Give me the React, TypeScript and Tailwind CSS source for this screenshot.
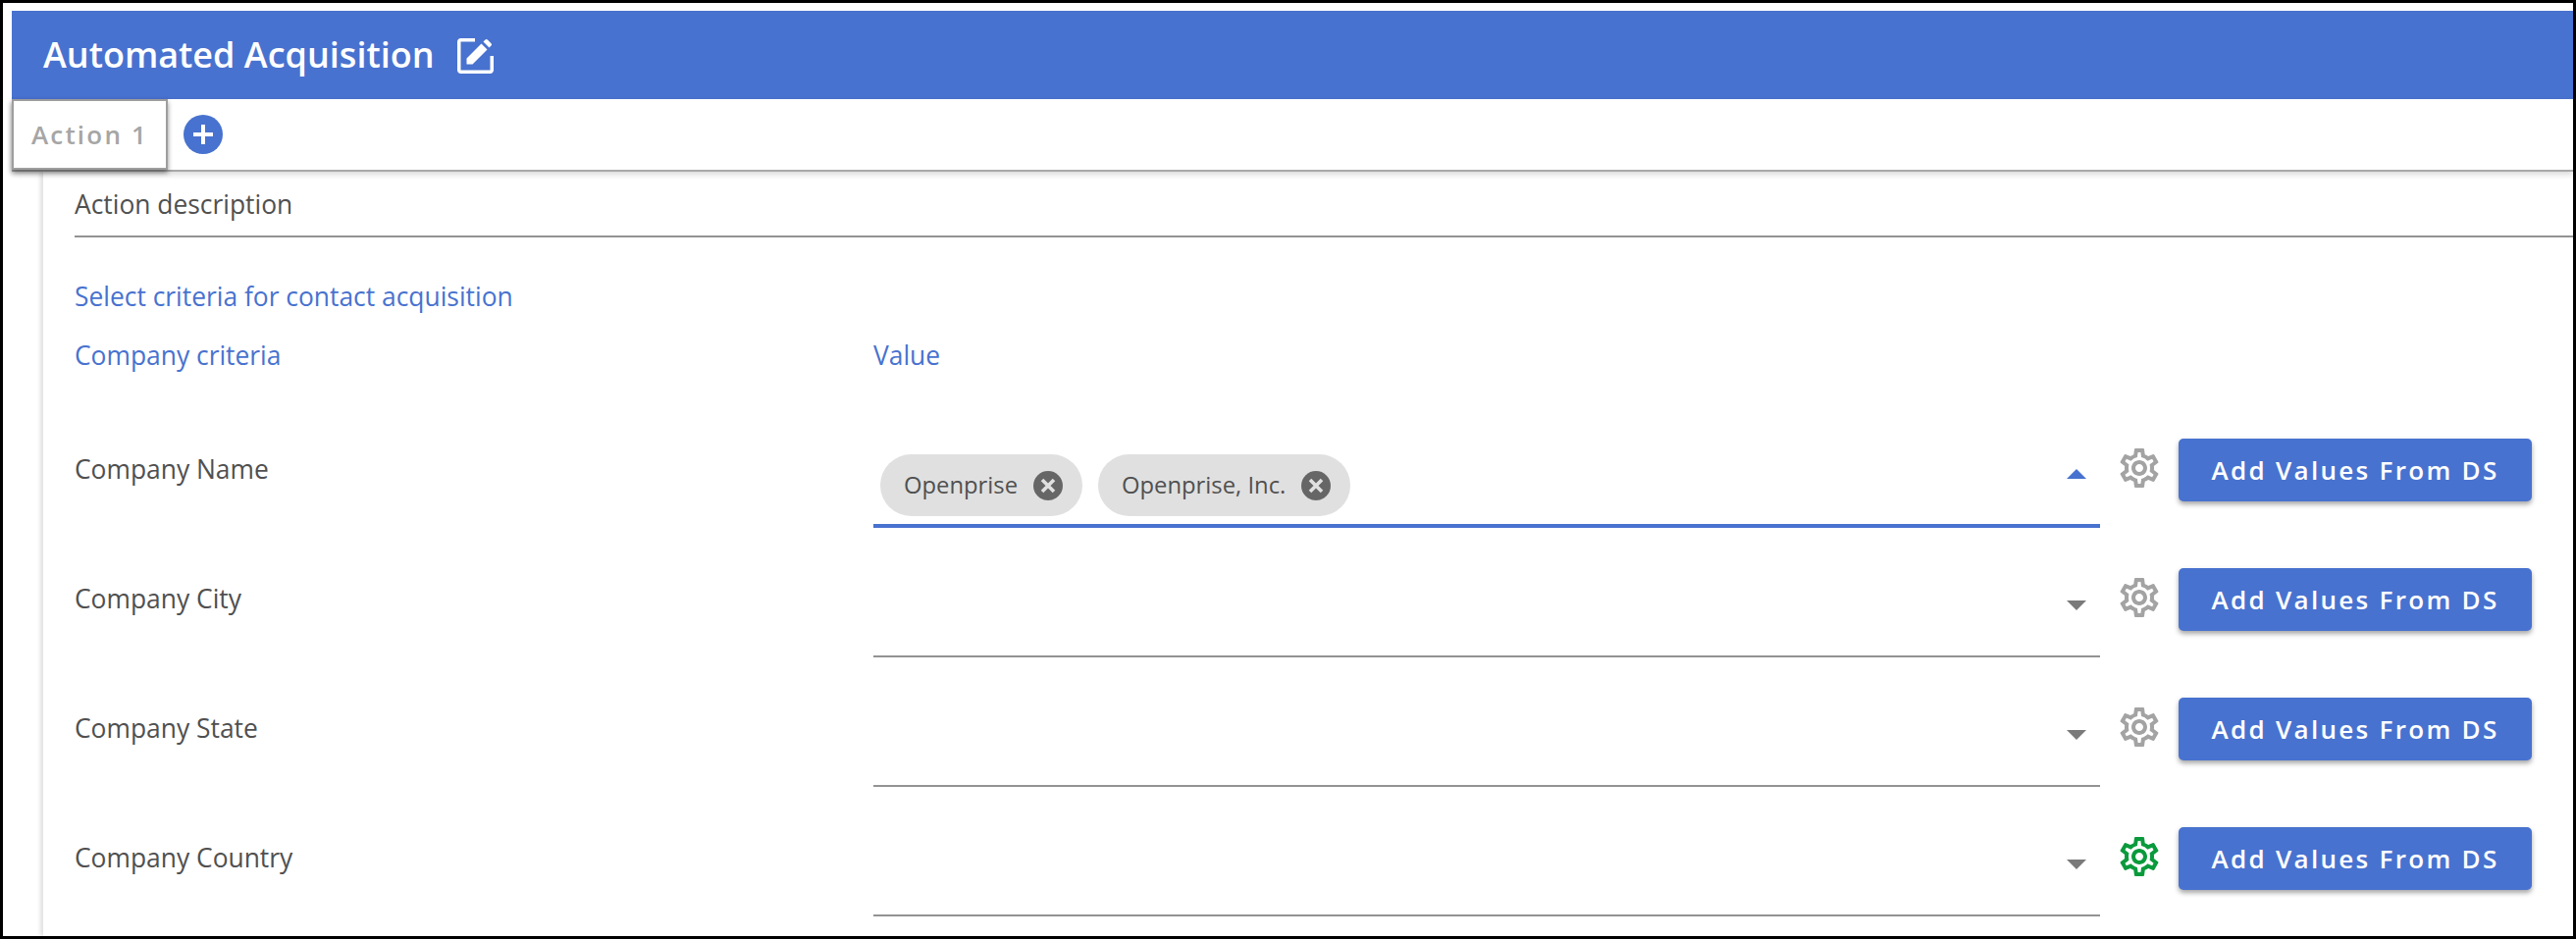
import React from 'react';

const GEAR = 'M19.43 12.98c.04-.32.07-.64.07-.98 0-.34-.03-.66-.07-.98l2.11-1.65c.19-.15.24-.42.12-.64l-2-3.46c-.09-.16-.26-.25-.44-.25-.06 0-.12.01-.17.03l-2.49 1c-.52-.4-1.08-.73-1.69-.98l-.38-2.65C14.46 2.18 14.25 2 14 2h-4c-.25 0-.46.18-.49.42l-.38 2.65c-.61.25-1.17.59-1.69.98l-2.49-1c-.06-.02-.12-.03-.18-.03-.17 0-.34.09-.43.25l-2 3.46c-.13.22-.07.49.12.64l2.11 1.65c-.04.32-.07.65-.07.98 0 .33.03.66.07.98l-2.11 1.65c-.19.15-.24.42-.12.64l2 3.46c.09.16.26.25.44.25.06 0 .12-.01.17-.03l2.49-1c.52.4 1.08.73 1.69.98l.38 2.65c.03.24.24.42.49.42h4c.25 0 .46-.18.49-.42l.38-2.65c.61-.25 1.17-.59 1.69-.98l2.49 1c.06.02.12.03.18.03.17 0 .34-.09.43-.25l2-3.46c.12-.22.07-.49-.12-.64l-2.11-1.65zm-1.98-1.71c.04.31.05.52.05.73 0 .21-.02.43-.05.73l-.14 1.13.89.7 1.08.84-.7 1.21-1.27-.51-1.04-.42-.9.68c-.43.32-.84.56-1.25.73l-1.06.43-.16 1.13-.2 1.35h-1.4l-.19-1.35-.16-1.13-1.06-.43c-.43-.18-.83-.41-1.23-.71l-.91-.7-1.06.43-1.27.51-.7-1.21 1.08-.84.89-.7-.14-1.13c-.03-.31-.05-.54-.05-.74s.02-.43.05-.73l.14-1.13-.89-.7-1.08-.84.7-1.21 1.27.51 1.04.42.9-.68c.43-.32.84-.56 1.25-.73l1.06-.43.16-1.13.2-1.35h1.39l.19 1.35.16 1.13 1.06.43c.43.18.83.41 1.23.71l.91.7 1.06-.43 1.27-.51.7 1.21-1.07.85-.89.7.14 1.13zM12 8c-2.21 0-4 1.79-4 4s1.79 4 4 4 4-1.79 4-4-1.79-4-4-4zm0 6c-1.1 0-2-.9-2-2s.9-2 2-2 2 .9 2 2-.9 2-2 2z';

const Gear = ({ active }: { active?: boolean }) => (
  <svg viewBox="0 0 24 24" className={`w-12 h-12 shrink-0 ml-[16px] mt-[47px] ${active ? 'text-[#0a9a3c]' : 'text-[#a3a3a3]'}`} fill="currentColor">
    <path d={GEAR} />
  </svg>
);

const Chip = ({ label }: { label: string }) => (
  <div className="flex items-center h-[63px] rounded-full bg-[#e0e0e0] pl-[24px] pr-[20px] mt-[57px] text-[23.8px] text-[#505050]">
    <span>{label}</span>
    <svg viewBox="0 0 30 30" className="w-[30px] h-[30px] ml-[16px]">
      <circle cx="15" cy="15" r="15" fill="#666666" />
      <path d="M9 9l12 12M21 9L9 21" stroke="#e0e0e0" strokeWidth="3.6" />
    </svg>
  </div>
);

const Row = ({ label, chips, open, active }: { label: string; chips?: string[]; open?: boolean; active?: boolean }) => (
  <div className="flex h-[132px]">
    <div className="w-[814px] shrink-0 pt-[54px] text-[26.4px] leading-[36px] text-[#505050]">{label}</div>
    <div className={`w-[1250px] shrink-0 flex gap-[16px] pl-[7px] pr-[14px] ${open ? 'border-b-4 border-[#4872cf]' : 'border-b-2 border-[#939393]'}`}>
      {chips?.map(c => <Chip key={c} label={c} />)}
      <svg viewBox="0 0 20 10" className={`w-5 h-[10px] ml-auto ${open ? 'mt-[72px] text-[#4872cf]' : 'mt-[74px] text-[#7a7a7a]'}`} fill="currentColor">
        <path d={open ? 'M10 0l10 10H0z' : 'M0 0h20L10 10z'} />
      </svg>
    </div>
    <Gear active={active} />
    <button className="w-[360px] h-[64px] mt-[41px] ml-[16px] shrink-0 rounded-[5px] bg-[#4872cf] text-white text-[26px] font-semibold tracking-[2.3px] shadow-[0_3px_5px_rgba(0,0,0,0.35)]">
      Add Values From DS
    </button>
  </div>
);

export default function App() {
  return (
    <div className="w-[2625px] h-[957px] overflow-hidden bg-black pt-[3px] pl-[3px] pr-[3px] pb-[3px] font-['Open_Sans',sans-serif]">
      <div className="h-full bg-white pt-[8px] pl-[9px] overflow-hidden flex flex-col">
        <div className="h-[90px] shrink-0 bg-[#4872cf] flex items-center pl-[32px] text-white">
          <span className="text-[36px] font-semibold">Automated Acquisition</span>
          <svg viewBox="0 0 37 36" className="w-[37px] h-[36px] ml-[23px] mt-[1px]" fill="none">
            <path d="M18 1.75H3.5a1.75 1.75 0 0 0-1.75 1.75v29a1.75 1.75 0 0 0 1.75 1.75h30a1.75 1.75 0 0 0 1.75-1.75V18" stroke="white" strokeWidth="3.5" />
            <path d="M9.5 26.5v-6L24.5 5.5l6 6-15 15zM26.5 3.5l2-2a1.6 1.6 0 0 1 2.3 0l3.7 3.7a1.6 1.6 0 0 1 0 2.3l-2 2z" fill="white" />
          </svg>
        </div>
        <div className="relative z-10 h-[74px] shrink-0 bg-white flex items-start border-b-2 border-[#a8a8a8] shadow-[0_3px_6px_rgba(0,0,0,0.15)]">
          <div className="w-[159px] h-[72px] flex items-center justify-center border-2 border-[#9e9e9e] bg-white text-[#a6a6a6] text-[26px] font-semibold tracking-[2.2px] shadow-[0_3px_5px_rgba(0,0,0,0.45)]">
            Action 1
          </div>
          <div className="w-10 h-10 rounded-full bg-[#4872cf] ml-[16px] mt-[16px] flex items-center justify-center">
            <svg viewBox="0 0 24 24" className="w-6 h-6"><path d="M12 2v20M2 12h20" stroke="white" strokeWidth="4" /></svg>
          </div>
        </div>
        <div className="ml-[32px] flex-1 pl-[32px] shadow-[-3px_0_4px_rgba(0,0,0,0.12)]">
          <div className="h-[67px] pt-[3px] border-b-2 border-[#939393] flex items-center text-[26.4px] text-[#505050]">Action description</div>
          <div className="mt-[42px] text-[26.4px] leading-[36px] text-[#4872cf]">Select criteria for contact acquisition</div>
          <div className="mt-[24px] flex text-[26.4px] leading-[36px] text-[#4872cf]">
            <div className="w-[814px]">Company criteria</div>
            <div>Value</div>
          </div>
          <div className="mt-[26px]">
            <Row label="Company Name" chips={['Openprise', 'Openprise, Inc.']} open />
            <Row label="Company City" />
            <Row label="Company State" />
            <Row label="Company Country" active />
          </div>
        </div>
      </div>
    </div>
  );
}
